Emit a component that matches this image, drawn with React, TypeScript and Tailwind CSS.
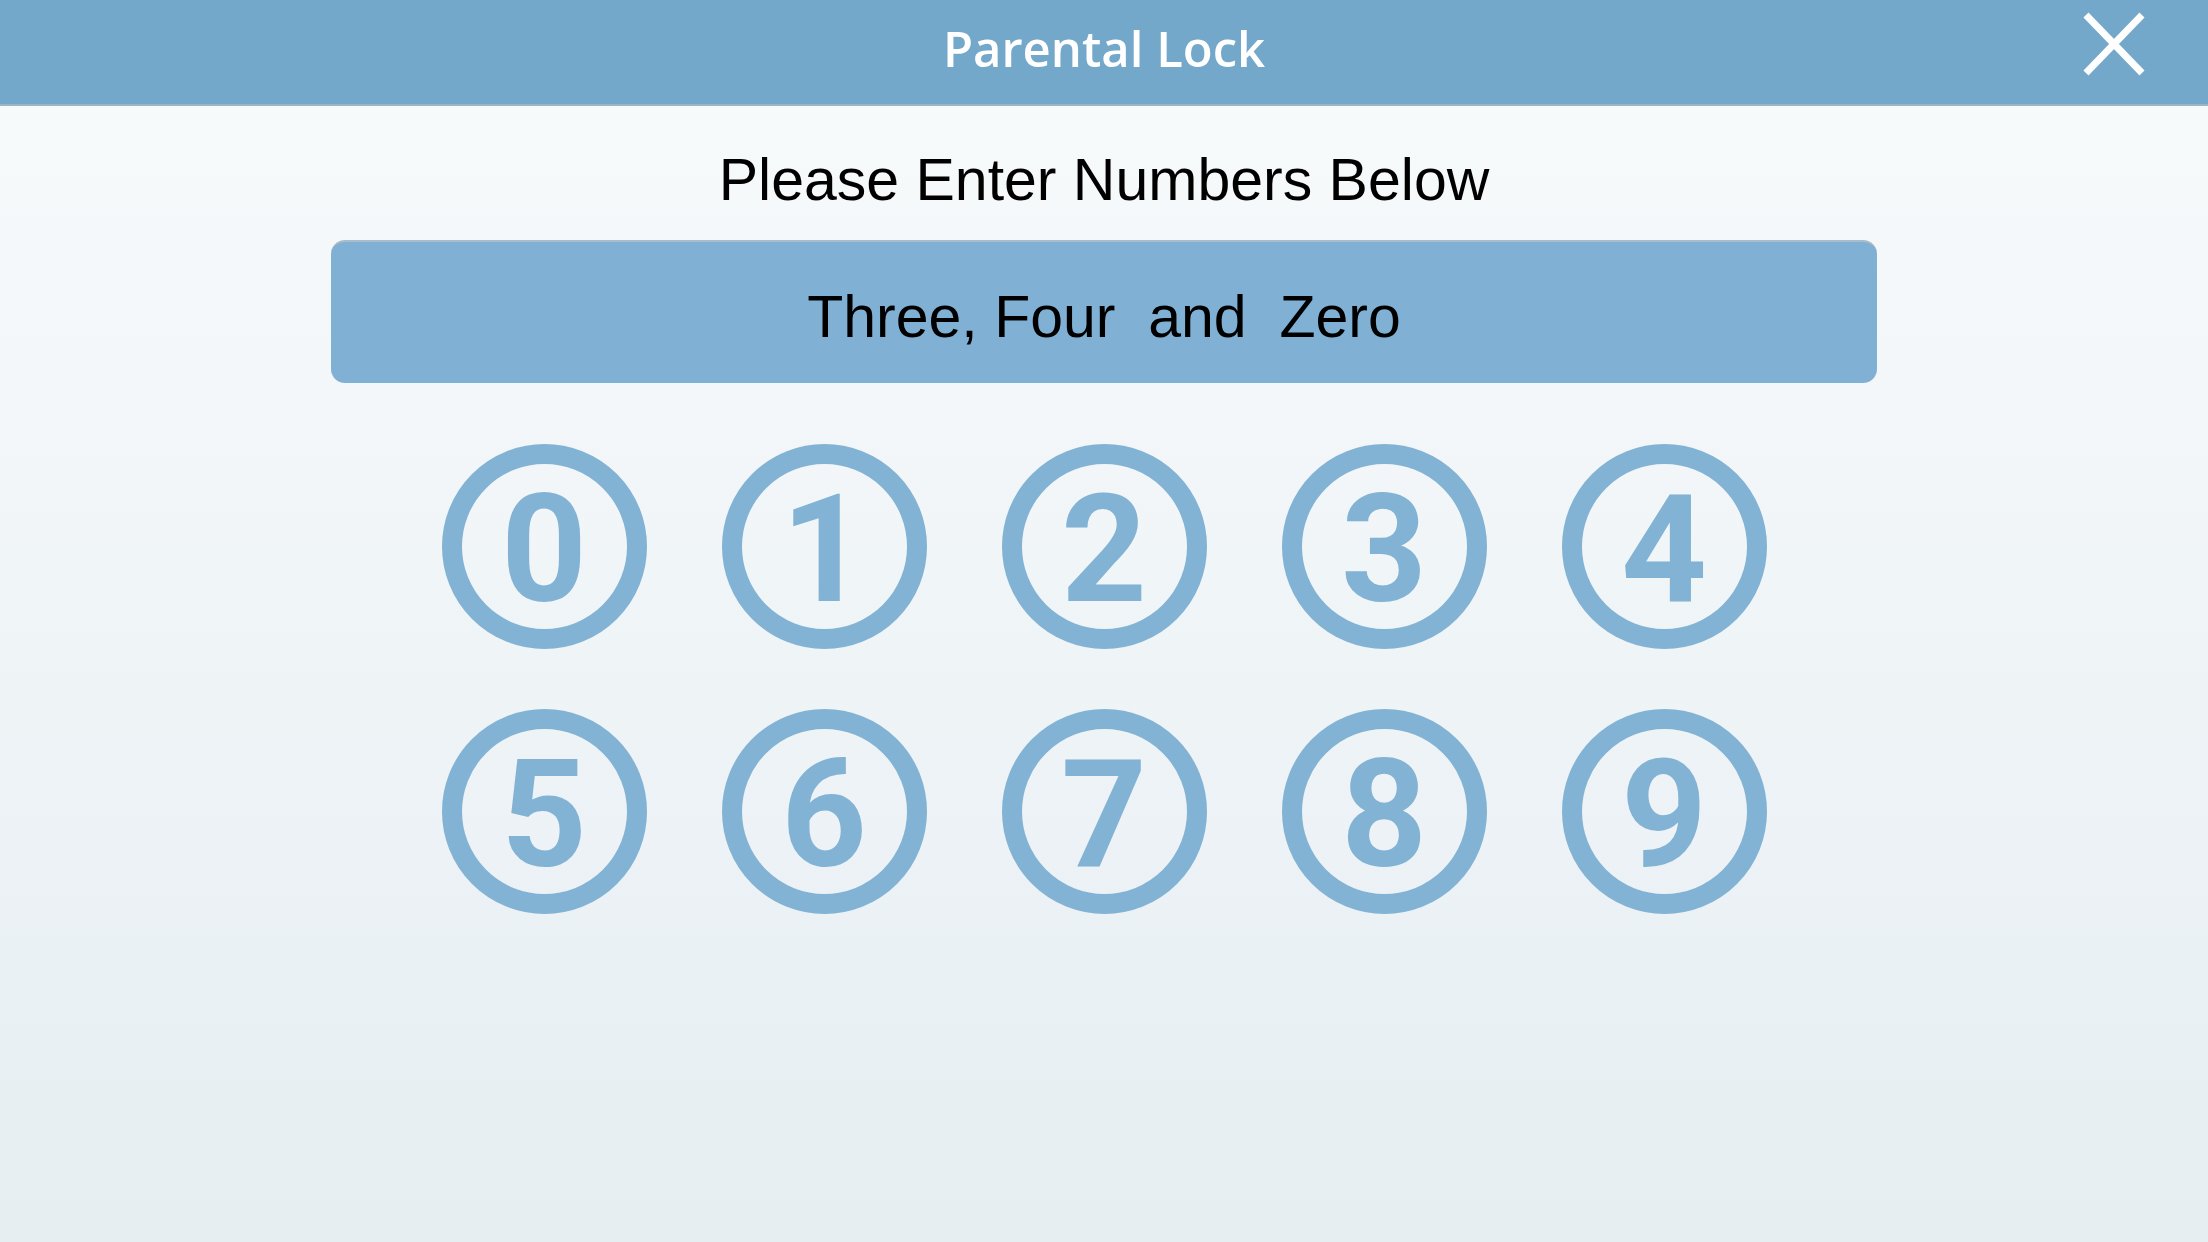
const DIGITS = [0, 1, 2, 3, 4, 5, 6, 7, 8, 9];

function DigitButton({ n }: { n: number }) {
  return (
    <button className="w-[205px] h-[205px] rounded-full border-[20px] border-[#82b3d4] flex items-center justify-center text-[#82b3d4] text-[150px] font-bold leading-none font-['Roboto',sans-serif]">
      <span className="translate-y-[3px]">{n}</span>
    </button>
  );
}

function CloseIcon() {
  return (
    <svg width="64" height="66" viewBox="0 0 64 66" fill="none" stroke="white" strokeWidth="7" strokeLinecap="butt">
      <path d="M4 4 L60 62 M60 4 L4 62" />
    </svg>
  );
}

export default function App() {
  return (
    <div className="w-[2208px] h-[1242px] flex flex-col bg-gradient-to-b from-[#f9fbfc] to-[#e6eef2] font-['Liberation_Sans',Arial,sans-serif]">
      <header className="h-[106px] shrink-0 bg-[#73a8ca] border-b-2 border-[#9fb4c2] flex items-center justify-between pl-[62px] pr-[62px]">
        <div className="w-[64px]" />
        <h1 className="text-white text-[49px] font-semibold -mt-[6px] font-['Open_Sans',sans-serif]">Parental Lock</h1>
        <button className="w-[64px] h-[66px] flex items-center justify-center -mt-[16px]">
          <CloseIcon />
        </button>
      </header>

      <main className="flex flex-col items-center">
        <p className="mt-[38px] text-[59px] leading-[72px] text-black">Please Enter Numbers Below</p>

        <div className="mt-[24px] w-[1546px] h-[143px] bg-[#80b1d4] rounded-[14px] border-t-2 border-[#a9bccb] flex items-center justify-center">
          <span className="mt-[10px] text-[59px] text-black whitespace-pre">Three, Four  and  Zero</span>
        </div>

        <div className="mt-[61px] grid grid-cols-5 gap-x-[75px] gap-y-[60px]">
          {DIGITS.map((n) => (
            <DigitButton key={n} n={n} />
          ))}
        </div>
      </main>
    </div>
  );
}
